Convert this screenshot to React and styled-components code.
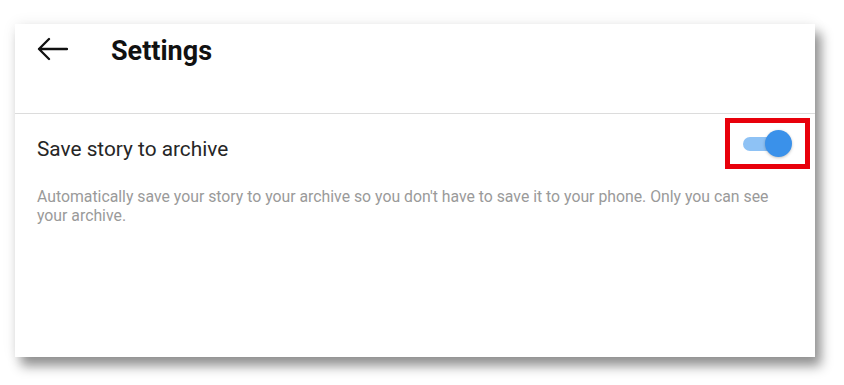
import styled, { createGlobalStyle } from "styled-components";

const Global = createGlobalStyle`
  body {
    margin: 0;
    background: #ffffff;
    font-family: Roboto, "Liberation Sans", Arial, sans-serif;
  }
`;

const Page = styled.div`
  width: 844px;
  height: 385px;
  padding: 24px 29px 0 15px;
  box-sizing: border-box;
`;

const Card = styled.div`
  width: 800px;
  height: 333px;
  background: #ffffff;
  box-shadow: 6px 9px 11px rgba(0, 0, 0, 0.42), 0 0 14px rgba(0, 0, 0, 0.07);
  display: flex;
  flex-direction: column;
`;

const Header = styled.div`
  height: 90px;
  border-bottom: 1px solid #dcdcdc;
  display: flex;
  align-items: flex-start;
  padding: 13px 0 0 21px;
  box-sizing: border-box;
  gap: 43px;
`;

const Back = styled.button`
  border: none;
  background: none;
  padding: 0;
  margin-top: 0;
  width: 32px;
  height: 24px;
  display: flex;
  align-items: center;
  cursor: pointer;
`;

const Title = styled.h1`
  margin: 0;
  font-size: 27px;
  font-weight: 700;
  color: #111;
  line-height: 28px;
`;

const Row = styled.div`
  display: flex;
  align-items: center;
  justify-content: space-between;
  padding: 4px 5px 0 22px;
`;

const Label = styled.span`
  font-size: 20.8px;
  color: #262626;
  margin-top: 10px;
`;

const Highlight = styled.div`
  width: 85px;
  height: 51px;
  border: 5px solid #e8000b;
  box-sizing: border-box;
  display: flex;
  align-items: center;
  padding-left: 13px;
`;

const Track = styled.div`
  position: relative;
  width: 42px;
  height: 14px;
  border-radius: 7px;
  background: #8ec2f5;
`;

const Knob = styled.div`
  position: absolute;
  right: -7px;
  top: -6.5px;
  width: 27px;
  height: 27px;
  border-radius: 50%;
  background: #3a91ea;
  box-shadow: 0 1px 3px rgba(0, 0, 0, 0.25);
`;

const Description = styled.p`
  margin: 18px 0 0;
  padding: 0 30px 0 22px;
  font-size: 15.8px;
  line-height: 19px;
  color: #9a9a9a;
`;

export default function App() {
  return (
    <>
      <Global />
      <Page>
        <Card>
          <Header>
            <Back aria-label="Back">
              <svg width="32" height="24" viewBox="0 0 32 24" fill="none">
                <path
                  d="M31 12H3M13 2L3 12l10 10"
                  stroke="#111"
                  strokeWidth="2.3"
                  strokeLinecap="round"
                  strokeLinejoin="round"
                />
              </svg>
            </Back>
            <Title>Settings</Title>
          </Header>
          <Row>
            <Label>Save story to archive</Label>
            <Highlight>
              <Track>
                <Knob />
              </Track>
            </Highlight>
          </Row>
          <Description>
            Automatically save your story to your archive so you don't have to
            save it to your phone. Only you can see your archive.
          </Description>
        </Card>
      </Page>
    </>
  );
}
